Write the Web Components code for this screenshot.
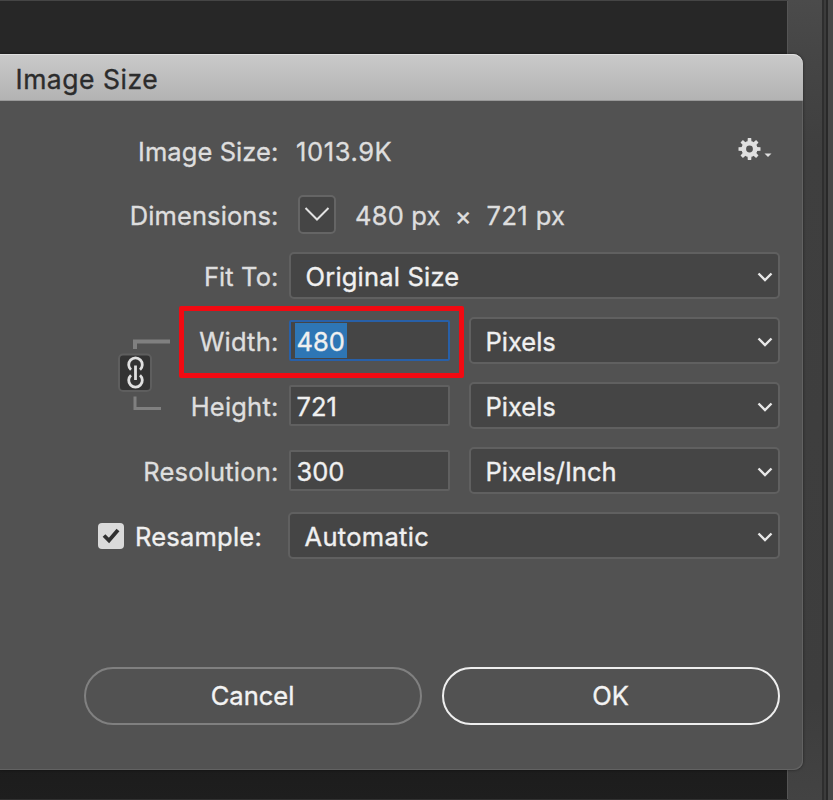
<!DOCTYPE html>
<html lang="en">
<head>
<meta charset="utf-8">
<title>Image Size</title>
<style>
html,body{margin:0;height:100%}
body{width:833px;height:800px;overflow:hidden;background:#272727;font-family:Inter,"Liberation Sans",sans-serif;font-size:25.5px;line-height:32px;color:#dedede;-webkit-text-stroke:.35px currentColor}
</style>
</head>
<body>
<app-backdrop>
<image-dialog heading="Image Size">
  <form-row style="--h:64px"><row-label style="--ls:.08px">Image Size:</row-label><ui-text style="--ml:17px;--ls:.6px">1013.9K</ui-text><gear-menu></gear-menu></form-row>
  <form-row style="--h:60px;--pt:4px"><row-label style="--ls:.1px">Dimensions:</row-label><square-button></square-button><ui-text style="--ml:19px;--ls:.2px">480 px</ui-text><ui-text style="--ml:14px">×</ui-text><ui-text style="--ml:15px;--ls:.4px">721 px</ui-text></form-row>
  <form-row><row-label style="--ls:.1px">Fit To:</row-label><select-box style="--ml:10px;--ls:.2px">Original Size</select-box></form-row>
  <form-row><row-label style="--ls:.2px">Width:</row-label><number-field active>480</number-field><select-box>Pixels</select-box></form-row>
  <form-row><row-label style="--ls:.2px">Height:</row-label><number-field>721</number-field><select-box>Pixels</select-box></form-row>
  <form-row><row-label style="--ls:.2px">Resolution:</row-label><number-field>300</number-field><select-box>Pixels/Inch</select-box></form-row>
  <form-row><check-label style="--ls:.22px">Resample:</check-label><select-box style="--ml:9px;--ls:.3px">Automatic</select-box></form-row>
  <link-toggle slot="overlay"></link-toggle>
  <highlight-frame slot="overlay"></highlight-frame>
  <pill-button slot="actions">Cancel</pill-button>
  <pill-button slot="actions" primary>OK</pill-button>
</image-dialog>
</app-backdrop>
<script>
const define = (name, html) => customElements.define(name, class extends HTMLElement {
  constructor() {
    super();
    this.attachShadow({ mode: 'open' }).innerHTML = html;
  }
  connectedCallback() {
    const h = this.shadowRoot.querySelector('[data-heading]');
    if (h) h.textContent = this.getAttribute('heading');
  }
});

define('app-backdrop', `<style>
:host{display:flex;height:800px;box-sizing:border-box;padding-top:54px;align-items:flex-start;
background:
 linear-gradient(#454545,#454545) 0 0/788px 1px no-repeat,
 linear-gradient(#303030,#303030) 0 799px/788px 1px no-repeat,
 linear-gradient(#272727 0,#272727 60px,#1c1c1c 760px,#1e1e1e 100%) 0 0/787px 100% no-repeat,
 linear-gradient(90deg,#555 0 1px,transparent 1px) 787px 0/46px 100% no-repeat,
 linear-gradient(90deg,transparent 0 35px,#2e2e2e 35px 37px,#3c3c3c 37px 39px,#292929 39px 41px,#484848 41px) 787px 0/46px 100% no-repeat,
 linear-gradient(#4b4b4b 0,#464646 50px,#3f3f3f 150px,#3d3d3d 700px,#434343 800px)}
</style><slot></slot>`);

define('image-dialog', `<style>
:host{display:flex;flex-direction:column;position:relative;width:803px;height:716px;box-sizing:border-box;background:#525252;border-radius:0 10px 9px 0;box-shadow:inset -1px -1px 0 #626262,0 0 3px rgba(0,0,0,.5)}
header{height:47px;box-sizing:border-box;padding:9px 0 0 15.5px;border-radius:0 10px 0 0;background:linear-gradient(#cacaca,#b2b2b2);box-shadow:inset 0 1px 0 #dfdfdf,inset 0 -1px 0 #999;color:#2c2c2c;font-size:26.5px;letter-spacing:.52px}
main{padding-top:18px;flex:1}
footer{display:flex;gap:20px;padding:0 23px 45px 84px}
</style><header data-heading></header><main><slot></slot></main><footer><slot name="actions"></slot></footer><slot name="overlay"></slot>`);

define('form-row', `<style>
:host{display:flex;align-items:center;height:var(--h,65px);padding:var(--pt,0) 23px 0 0;box-sizing:border-box}
</style><slot></slot>`);

define('row-label', `<style>
:host{display:block;width:279px;box-sizing:border-box;padding:2px .5px 0 0;text-align:right;white-space:nowrap;letter-spacing:var(--ls,0)}
</style><slot></slot>`);

define('ui-text', `<style>
:host{display:block;padding-top:2px;margin-left:var(--ml,0);white-space:nowrap;letter-spacing:var(--ls,0)}
</style><slot></slot>`);

define('gear-menu', `<style>
:host{display:flex;margin-left:auto;margin-right:7px;margin-top:-4px}
</style><svg width="36" height="26" viewBox="0 0 36 26"><g transform="translate(12.5 13)" fill="#dfdfdf">
<path fill-rule="evenodd" d="M-8 0a8 8 0 1 0 16 0a8 8 0 1 0-16 0M-3.400 0a3.400 3.400 0 1 1 6.800 0a3.400 3.400 0 1 1-6.800 0"/>
<path d="M-2-7L-1.700-11H1.700L2-7ZM-2 7L-1.700 11H1.700L2 7Z"/><path transform="rotate(45)" d="M-2-7L-1.700-11H1.700L2-7ZM-2 7L-1.700 11H1.700L2 7Z"/><path transform="rotate(90)" d="M-2-7L-1.700-11H1.700L2-7ZM-2 7L-1.700 11H1.700L2 7Z"/><path transform="rotate(135)" d="M-2-7L-1.700-11H1.700L2-7ZM-2 7L-1.700 11H1.700L2 7Z"/></g>
<path fill="#dfdfdf" d="M27.500 17.500H34.500L31 21Z"/></svg>`);

define('square-button', `<style>
:host{display:grid;place-items:center;width:38px;height:39px;box-sizing:border-box;margin:-2px 0 0 19px;background:#454545;border:2px solid #656565;border-radius:5px}
</style><svg width="26" height="16" viewBox="0 0 26 16"><path d="M1.500 2L13 13.500L24.500 2" fill="none" stroke="#e2e2e2" stroke-width="2"/></svg>`);

define('select-box', `<style>
:host{flex:1;display:flex;align-items:center;justify-content:space-between;height:47px;box-sizing:border-box;margin-left:var(--ml,19px);padding:2px 5px 0 14.5px;background:#454545;border:2px solid #606060;border-radius:5px;color:#f0f0f0;white-space:nowrap;letter-spacing:var(--ls,0)}
</style><span><slot></slot></span><svg width="16" height="12" viewBox="0 0 16 12"><path d="M1.500 2.500L8 9L14.500 2.500" fill="none" stroke="#e8e8e8" stroke-width="2.400"/></svg>`);

define('number-field', `<style>
:host{display:flex;align-items:center;width:161px;height:41px;box-sizing:border-box;margin-left:10px;padding:2px 0 0 3.5px;background:#454545;border:2px solid #606060;border-radius:2px;color:#f0f0f0}
:host([active]){border:2px solid #2860a8;padding-top:0}
span{padding:0 2px}
:host([active]) span{background:#2e76b5;height:35px;line-height:38px}
</style><span><slot></slot></span>`);

define('check-label', `<style>
:host{display:flex;align-items:center;width:279px;box-sizing:border-box;padding-left:98px;gap:11px;color:#f0f0f0;letter-spacing:var(--ls,0)}
i{display:grid;place-items:center;width:26px;height:26px;background:#dadada;border-radius:4px}
span{padding-top:2px}
</style><i><svg width="18" height="16" viewBox="0 0 18 16"><path d="M2 7.500L7 12.500L16 2" fill="none" stroke="#303030" stroke-width="3.800"/></svg></i><span><slot></slot></span>`);

define('link-toggle', `<style>
:host{position:absolute;left:118px;top:284px}
svg{display:block}
</style><svg width="54" height="74" viewBox="0 0 54 74">
<path d="M17 11V3.500H52" fill="none" stroke="#808080" stroke-width="4"/><path d="M17 58.500V70.500H43" fill="none" stroke="#808080" stroke-width="3"/>
<rect x="1" y="16.500" width="32" height="36.500" rx="4" fill="#333" stroke="#5e5e5e" stroke-width="2"/>
<g fill="none" stroke="#e0e0e0" stroke-width="2.800"><path d="M13 31.800A6.800 6.800 0 1 1 22 31.800"/><path d="M13 37.200A6.800 6.800 0 1 0 22 37.200"/><path d="M17.500 27.500V42"/></g></svg>`);

define('highlight-frame', `<style>
:host{position:absolute;left:179px;top:252px;width:285px;height:72px;box-sizing:border-box;border:5px solid #f20a12;border-radius:2px}
</style>`);

define('pill-button', `<style>
:host{flex:1;display:grid;place-items:center;height:58px;box-sizing:border-box;border:2px solid #808080;border-radius:29px;color:#f3f3f3}
:host([primary]){border-color:#eee}
span{margin-right:1px}
</style><span><slot></slot></span>`);
</script>
</body>
</html>
